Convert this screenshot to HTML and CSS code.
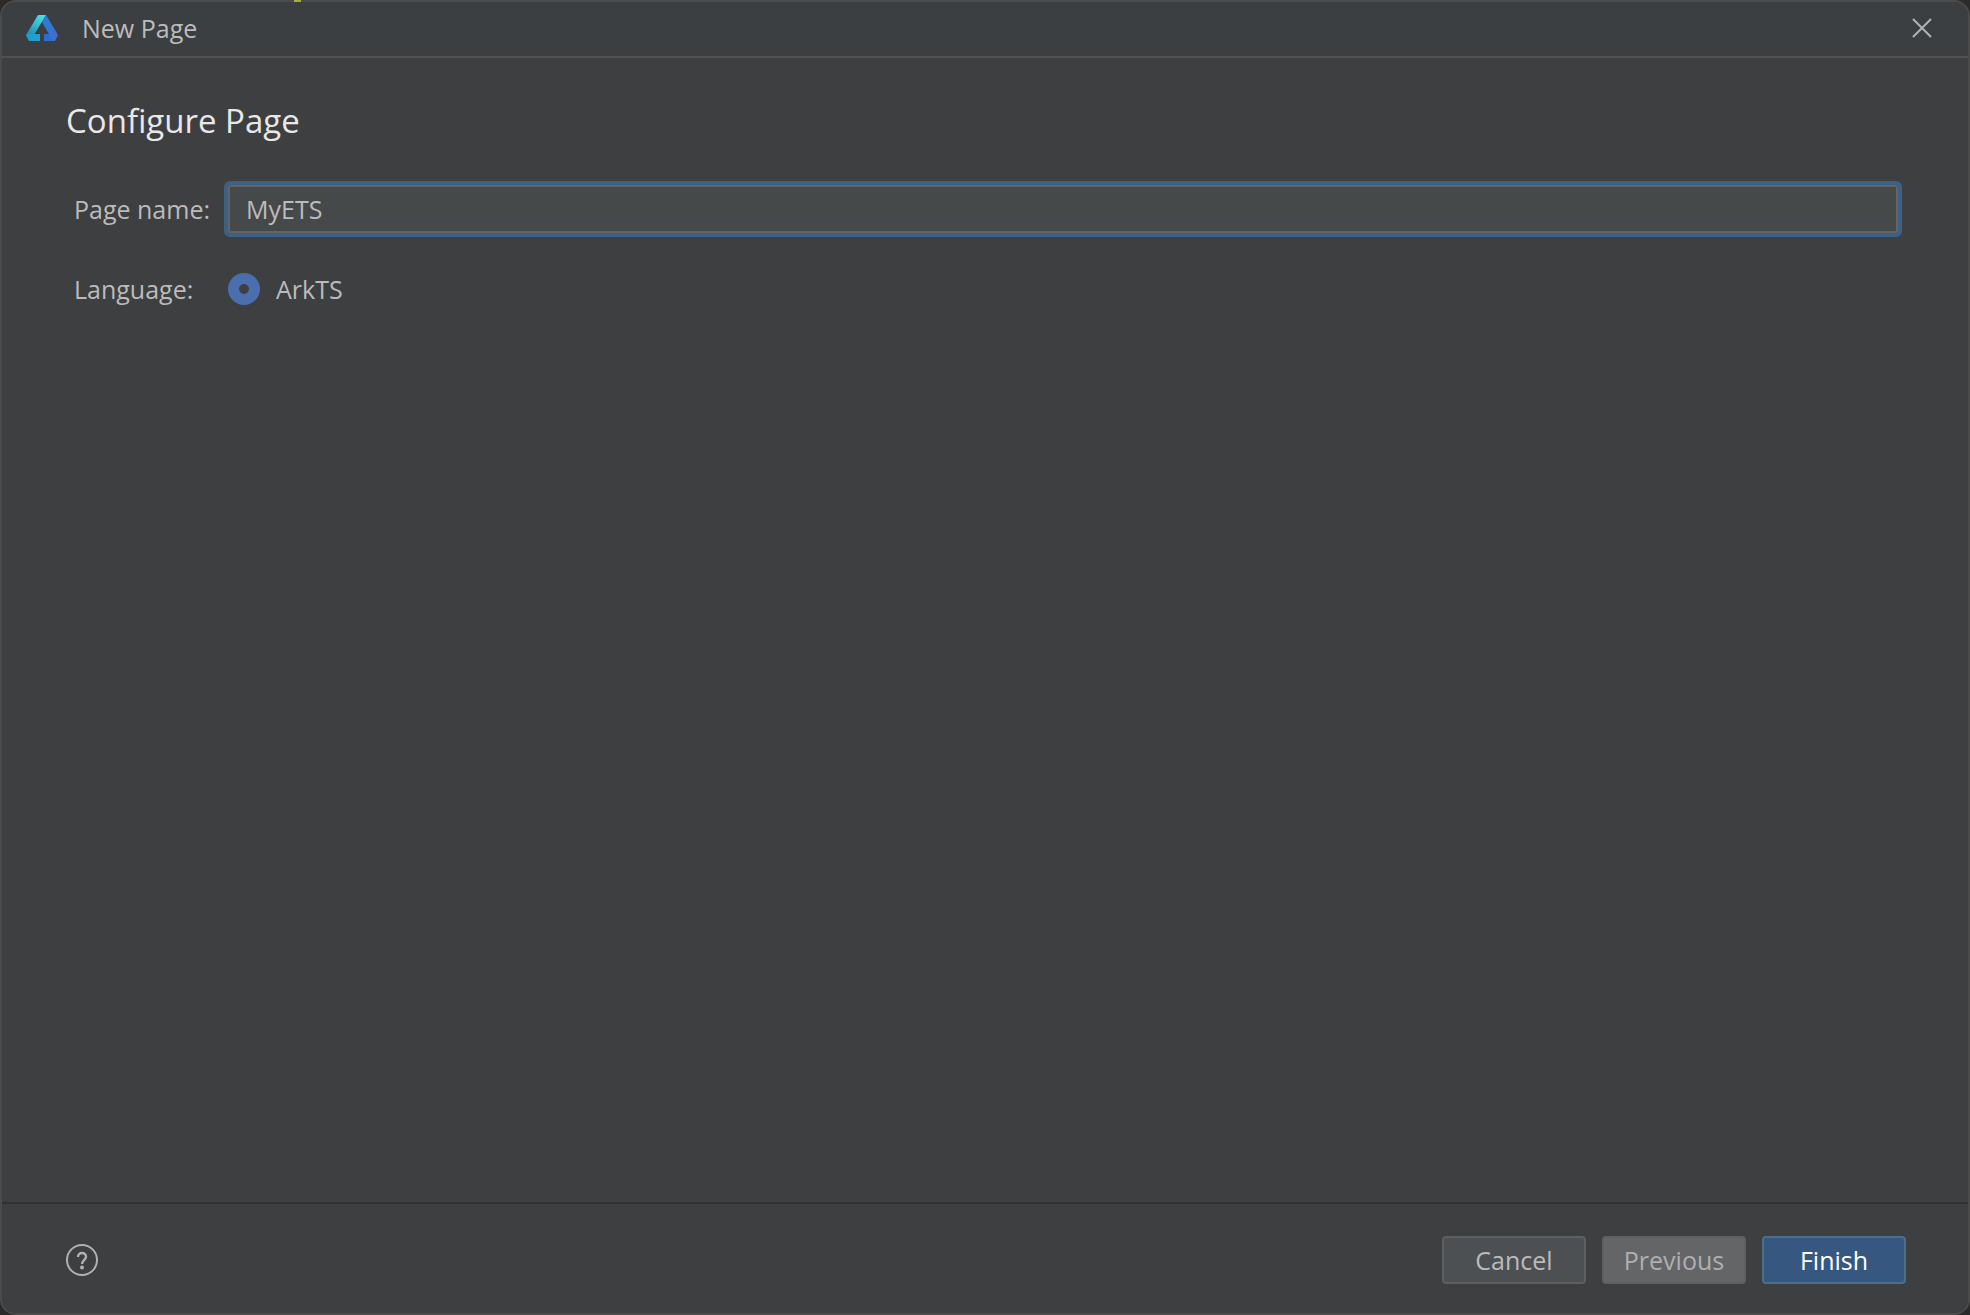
FILE: index.html
```html
<!DOCTYPE html>
<html lang="en">
<head>
  <meta charset="UTF-8">
  <meta name="viewport" content="width=device-width, initial-scale=1.0">
  <title>New Page</title>
  <link rel="stylesheet" href="styles.css">
</head>
<body>

  <form class="dialog">
    <header class="title-bar">
      <svg class="logo" viewBox="0 0 32 26" aria-hidden="true">
        <defs>
          <linearGradient id="left" x1="0.8" y1="0" x2="0.2" y2="1">
            <stop offset="0" stop-color="#4de0e6"/>
            <stop offset="1" stop-color="#1d8fb8"/>
          </linearGradient>
          <linearGradient id="right" x1="0" y1="0" x2="1" y2="1">
            <stop offset="0" stop-color="#2385d8"/>
            <stop offset="1" stop-color="#4a66cc"/>
          </linearGradient>
        </defs>
        <path d="M12 0H20L8 20H0Z" fill="url(#left)"/>
        <path d="M1 19H14V26H3L0 20Z" fill="#1f9fd0"/>
        <path d="M18 19H28V26H18Z" fill="#2a6fd0"/>
        <path d="M20 0L32 20L29 26H27L16 7Z" fill="url(#right)"/>
      </svg>
      <span class="title">New Page</span>
      <button type="button" class="close-button" aria-label="Close">
        <svg viewBox="0 0 20 20" aria-hidden="true">
          <path d="M1 1L19 19M19 1L1 19" fill="none" stroke="#afb1b3" stroke-width="2"/>
        </svg>
      </button>
    </header>

    <main class="content">
      <h1>Configure Page</h1>

      <div class="form-row">
        <label class="form-label" for="pageName">Page name:</label>
        <input type="text" class="text-input" id="pageName" value="MyETS">
      </div>

      <div class="form-row" role="radiogroup" aria-labelledby="languageLabel">
        <span class="form-label" id="languageLabel">Language:</span>
        <label class="radio-option">
          <input type="radio" class="radio" name="language" value="arkts" checked>
          ArkTS
        </label>
      </div>
    </main>

    <footer class="footer">
      <button type="button" class="help-button" aria-label="Help">
        <svg viewBox="0 0 32 32" aria-hidden="true">
          <circle cx="16" cy="16" r="15" fill="none" stroke="#afb1b3" stroke-width="2"/>
          <path d="M12 13C12 10.500 13.700 9 16 9S20 10.600 20 12.800C20 15.700 16 16 16 20" fill="none" stroke="#afb1b3" stroke-width="2.400"/>
          <circle cx="16" cy="23.500" r="2" fill="#afb1b3"/>
        </svg>
      </button>
      <button type="button" class="button">Cancel</button>
      <button type="button" class="button" disabled>Previous</button>
      <button type="submit" class="button button-primary">Finish</button>
    </footer>
  </form>

</body>
</html>
```
FILE: styles.css
```css
* {
  box-sizing: border-box;
}

/* the window behind shows faintly through the dialog border */
body {
  margin: 0;
  background: linear-gradient(to right, transparent 294px, #f5e515 294px, #f5e515 301px, transparent 301px) 0 0 / 100% 2px no-repeat #2b2b2b;
  color: #bbbbbb;
  font-family: "Open Sans", "Noto Sans", sans-serif;
  font-size: 25px;
  line-height: 32px;
}

button,
input {
  font: inherit;
  color: inherit;
}

.dialog {
  display: flex;
  flex-direction: column;
  min-height: 100vh;
  background-color: #3e3f41;
  background-clip: padding-box;
  border: 2px solid rgba(107, 107, 107, 0.5);
  border-radius: 16px;
  overflow: hidden;
}

.title-bar {
  display: flex;
  align-items: center;
  height: 56px;
  padding: 0 36px 2px 24px;
  background-color: #3c3f41;
  border-bottom: 2px solid #515151;
}

.logo {
  width: 32px;
  height: 26px;
  margin-right: 24px;
}

.title {
  flex: 1;
}

.close-button,
.help-button {
  display: flex;
  padding: 0;
  background: none;
  border: none;
  cursor: pointer;
}

.close-button svg {
  width: 20px;
  height: 20px;
}

.help-button svg {
  width: 32px;
  height: 32px;
}

.content {
  flex: 1;
  padding: 40px 66px 40px 64px;
}

h1 {
  margin: 0 0 37px;
  color: #e8e8e8;
  font-size: 33px;
  font-weight: normal;
  line-height: 46px;
}

.form-row {
  display: flex;
  align-items: center;
  height: 56px;
  margin-bottom: 24px;
  padding-left: 8px;
}

.form-label {
  width: 150px;
}

.text-input {
  flex: 1;
  min-width: 0;
  height: 56px;
  padding: 0 18px;
  background-color: #45494a;
  border: 4px solid #3d6185;
  border-radius: 6px;
  box-shadow: inset 0 0 0 2px #646464;
  outline: none;
}

.radio-option {
  display: flex;
  align-items: center;
  gap: 16px;
  padding-left: 4px;
}

.radio {
  appearance: none;
  width: 32px;
  height: 32px;
  margin: 0;
  border: 2px solid #6b6b6b;
  border-radius: 50%;
}

.radio:checked {
  background-color: #3e3f41;
  border: 11px solid #4b6eaf;
}

.footer {
  display: flex;
  align-items: center;
  gap: 16px;
  padding: 32px 62px 29px 64px;
  border-top: 2px solid #323232;
}

.help-button {
  margin-right: auto;
}

.button {
  width: 144px;
  height: 48px;
  padding: 0;
  background-color: #4c5052;
  border: 2px solid #5e6060;
  border-radius: 4px;
  line-height: 32px;
  cursor: pointer;
}

.button:disabled {
  background-color: #646566;
  color: #afafaf;
  cursor: default;
}

.button-primary {
  background-color: #365880;
  border-color: #4c708c;
  color: #ffffff;
}
```
